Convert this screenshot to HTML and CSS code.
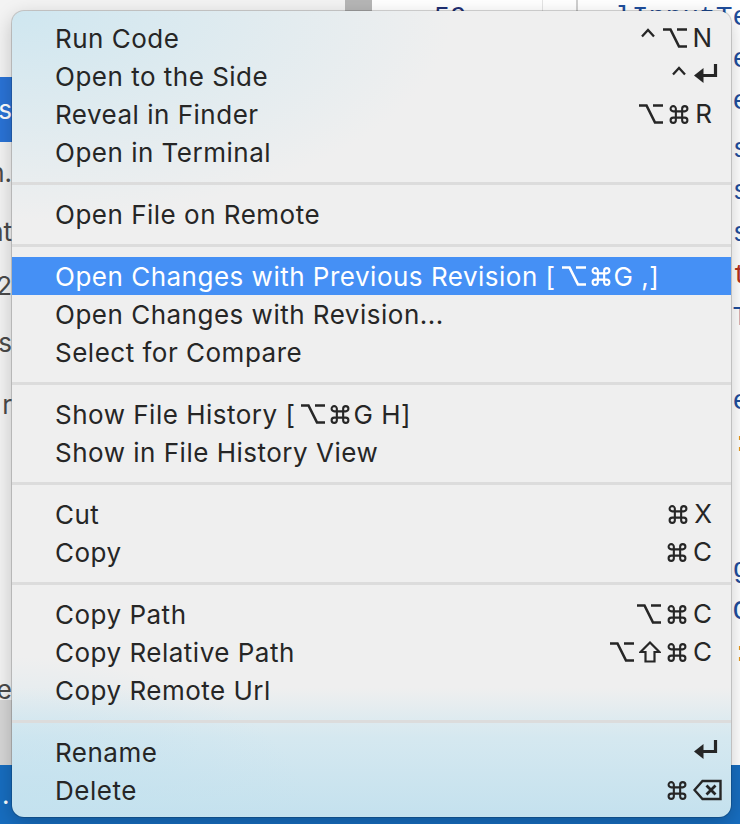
FILE: index.html
```html
<!DOCTYPE html>
<html lang="en">
<head>
<meta charset="utf-8">
<title>Context menu</title>
<link rel="stylesheet" href="styles.css">
</head>
<body>
<div class="desk">
  <aside class="sidebar">
    <div class="srow r1"></div>
    <div class="srow r2 sel"><span>Files</span></div>
    <div class="srow r3"><span>json.</span></div>
    <div class="srow r4"><span>print</span></div>
    <div class="srow r5"><span>v2</span></div>
    <div class="srow r6"><span>tests</span></div>
    <div class="srow r7"><span>r</span></div>
    <div class="srow r8"></div>
    <div class="srow r9"><span>package</span></div>
    <div class="srow r10"></div>
  </aside>
  <div class="scrollcol"><div class="thumb"></div></div>
  <main class="editor">
    <div class="gutter"><div class="ln">59</div></div>
    <div class="fold"></div>
    <div class="code">
      <div class="cl kw">lInputTe</div>
      <div class="cl kw">       e</div>
      <div class="cl kw">       e</div>
      <div class="cl kw s1">       s</div>
      <div class="cl kw">       s</div>
      <div class="cl kw">       s</div>
      <div class="cl red">       t</div>
      <div class="cl kw">       T</div>
      <div class="cl kw">        </div>
      <div class="cl kw">       e</div>
      <div class="cl or">       :</div>
      <div class="cl kw">        </div>
      <div class="cl kw">        </div>
      <div class="cl kw">       g</div>
      <div class="cl kw">       C</div>
      <div class="cl or">       :</div>
    </div>
  </main>
</div>
<footer class="status"><span class="dot">.</span></footer>

<div class="menu">
  <div class="item"><span class="label">Run Code</span>
    <span class="keys"><svg class="ctrl" width="16" height="20" viewBox="0 0 16 20"><path d="M2 8.5 L8 2 L14 8.5" fill="none" stroke="currentColor" stroke-width="2.3"/></svg><svg class="opt" width="24" height="20" viewBox="0 0 24 20"><path d="M0 1.5 H7.5 L16 18.5 H24 M14 1.5 H24" fill="none" stroke="currentColor" stroke-width="2.6"/></svg><span class="k">N</span></span></div>
  <div class="item"><span class="label">Open to the Side</span>
    <span class="keys"><svg class="ctrl" width="16" height="20" viewBox="0 0 16 20"><path d="M2 8.5 L8 2 L14 8.5" fill="none" stroke="currentColor" stroke-width="2.3"/></svg><svg class="ret" width="24" height="24" viewBox="0 0 24 24"><path d="M21.5 0 V11.5 H8" fill="none" stroke="currentColor" stroke-width="3.2"/><path d="M0 11.5 L9.5 4 V19 Z" fill="currentColor"/></svg></span></div>
  <div class="item"><span class="label">Reveal in Finder</span>
    <span class="keys"><svg class="opt" width="24" height="20" viewBox="0 0 24 20"><path d="M0 1.5 H7.5 L16 18.5 H24 M14 1.5 H24" fill="none" stroke="currentColor" stroke-width="2.6"/></svg><svg class="cmd" width="22" height="21" viewBox="0 0 20 20"><path d="M7 7V4.5a2.5 2.5 0 1 0-2.5 2.5H15.5a2.5 2.5 0 1 0-2.5-2.5V15.5a2.5 2.5 0 1 0 2.5-2.5H4.5a2.5 2.5 0 1 0 2.5 2.5Z" fill="none" stroke="currentColor" stroke-width="2"/></svg><span class="k">R</span></span></div>
  <div class="item"><span class="label">Open in Terminal</span></div>
  <div class="sep"></div>
  <div class="item"><span class="label">Open File on Remote</span></div>
  <div class="sep"></div>
  <div class="item active"><span class="label">Open Changes with Previous Revision [<svg class="opt in" width="24" height="20" viewBox="0 0 24 20"><path d="M0 1.5 H7.5 L16 18.5 H24 M14 1.5 H24" fill="none" stroke="currentColor" stroke-width="2.6"/></svg><svg class="cmd in" width="22" height="21" viewBox="0 0 20 20"><path d="M7 7V4.5a2.5 2.5 0 1 0-2.5 2.5H15.5a2.5 2.5 0 1 0-2.5-2.5V15.5a2.5 2.5 0 1 0 2.5-2.5H4.5a2.5 2.5 0 1 0 2.5 2.5Z" fill="none" stroke="currentColor" stroke-width="2"/></svg>G ,]</span></div>
  <div class="item"><span class="label">Open Changes with Revision...</span></div>
  <div class="item"><span class="label">Select for Compare</span></div>
  <div class="sep"></div>
  <div class="item"><span class="label">Show File History [<svg class="opt in" width="24" height="20" viewBox="0 0 24 20"><path d="M0 1.5 H7.5 L16 18.5 H24 M14 1.5 H24" fill="none" stroke="currentColor" stroke-width="2.6"/></svg><svg class="cmd in" width="22" height="21" viewBox="0 0 20 20"><path d="M7 7V4.5a2.5 2.5 0 1 0-2.5 2.5H15.5a2.5 2.5 0 1 0-2.5-2.5V15.5a2.5 2.5 0 1 0 2.5-2.5H4.5a2.5 2.5 0 1 0 2.5 2.5Z" fill="none" stroke="currentColor" stroke-width="2"/></svg>G H]</span></div>
  <div class="item"><span class="label">Show in File History View</span></div>
  <div class="sep"></div>
  <div class="item"><span class="label">Cut</span>
    <span class="keys"><svg class="cmd" width="22" height="21" viewBox="0 0 20 20"><path d="M7 7V4.5a2.5 2.5 0 1 0-2.5 2.5H15.5a2.5 2.5 0 1 0-2.5-2.5V15.5a2.5 2.5 0 1 0 2.5-2.5H4.5a2.5 2.5 0 1 0 2.5 2.5Z" fill="none" stroke="currentColor" stroke-width="2"/></svg><span class="k">X</span></span></div>
  <div class="item"><span class="label">Copy</span>
    <span class="keys"><svg class="cmd" width="22" height="21" viewBox="0 0 20 20"><path d="M7 7V4.5a2.5 2.5 0 1 0-2.5 2.5H15.5a2.5 2.5 0 1 0-2.5-2.5V15.5a2.5 2.5 0 1 0 2.5-2.5H4.5a2.5 2.5 0 1 0 2.5 2.5Z" fill="none" stroke="currentColor" stroke-width="2"/></svg><span class="k">C</span></span></div>
  <div class="sep"></div>
  <div class="item"><span class="label">Copy Path</span>
    <span class="keys"><svg class="opt" width="24" height="20" viewBox="0 0 24 20"><path d="M0 1.5 H7.5 L16 18.5 H24 M14 1.5 H24" fill="none" stroke="currentColor" stroke-width="2.6"/></svg><svg class="cmd" width="22" height="21" viewBox="0 0 20 20"><path d="M7 7V4.5a2.5 2.5 0 1 0-2.5 2.5H15.5a2.5 2.5 0 1 0-2.5-2.5V15.5a2.5 2.5 0 1 0 2.5-2.5H4.5a2.5 2.5 0 1 0 2.5 2.5Z" fill="none" stroke="currentColor" stroke-width="2"/></svg><span class="k">C</span></span></div>
  <div class="item"><span class="label">Copy Relative Path</span>
    <span class="keys"><svg class="opt" width="24" height="20" viewBox="0 0 24 20"><path d="M0 1.5 H7.5 L16 18.5 H24 M14 1.5 H24" fill="none" stroke="currentColor" stroke-width="2.6"/></svg><svg class="shift" width="22" height="22" viewBox="0 0 22 22"><path d="M11 1.5 L20.5 11 H15.5 V20.5 H6.5 V11 H1.5 Z" fill="none" stroke="currentColor" stroke-width="2.2" stroke-linejoin="miter"/></svg><svg class="cmd" width="22" height="21" viewBox="0 0 20 20"><path d="M7 7V4.5a2.5 2.5 0 1 0-2.5 2.5H15.5a2.5 2.5 0 1 0-2.5-2.5V15.5a2.5 2.5 0 1 0 2.5-2.5H4.5a2.5 2.5 0 1 0 2.5 2.5Z" fill="none" stroke="currentColor" stroke-width="2"/></svg><span class="k">C</span></span></div>
  <div class="item"><span class="label">Copy Remote Url</span></div>
  <div class="sep"></div>
  <div class="item"><span class="label">Rename</span>
    <span class="keys"><svg class="ret" width="24" height="24" viewBox="0 0 24 24"><path d="M21.5 0 V11.5 H8" fill="none" stroke="currentColor" stroke-width="3.2"/><path d="M0 11.5 L9.5 4 V19 Z" fill="currentColor"/></svg></span></div>
  <div class="item"><span class="label">Delete</span>
    <span class="keys"><svg class="cmd" width="22" height="21" viewBox="0 0 20 20"><path d="M7 7V4.5a2.5 2.5 0 1 0-2.5 2.5H15.5a2.5 2.5 0 1 0-2.5-2.5V15.5a2.5 2.5 0 1 0 2.5-2.5H4.5a2.5 2.5 0 1 0 2.5 2.5Z" fill="none" stroke="currentColor" stroke-width="2"/></svg><svg class="del" width="29" height="22" viewBox="0 0 29 22"><path d="M1.5 11 L9.5 2 H27.5 V20 H9.5 Z" fill="none" stroke="currentColor" stroke-width="2.4" stroke-linejoin="miter"/><path d="M13.5 6.5 L22.5 15.5 M22.5 6.5 L13.5 15.5" fill="none" stroke="currentColor" stroke-width="2.8"/></svg></span></div>
</div>
</body>
</html>
```

FILE: styles.css
```css
html, body {
  margin: 0;
  padding: 0;
}
body {
  width: 740px;
  height: 824px;
  overflow: hidden;
  position: relative;
  background: #ffffff;
  font-family: Inter, "Noto Sans", "DejaVu Sans", sans-serif;
}

/* ---------- background editor ---------- */
.desk {
  display: grid;
  grid-template-columns: 345px 27px 1fr;
  grid-template-rows: 765px;
  height: 765px;
  overflow: hidden;
}
.sidebar {
  background: #f3f3f3;
  display: flex;
  flex-direction: column;
  font-size: 26px;
  color: #4a4a4a;
  overflow: hidden;
}
.srow {
  width: 12px;
  display: flex;
  justify-content: flex-end;
  align-items: center;
  overflow: hidden;
  white-space: nowrap;
  flex: none;
}
.srow span { flex: none; }
.r1 { height: 77px; }
.r2 { height: 65px; }
.r3 { height: 60px; }
.r4 { height: 58px; }
.r5 { height: 50px; }
.r6 { height: 64px; }
.r7 { height: 60px; }
.r8 { height: 100px; }
.r9 { height: 166px; align-items: flex-start; }
.r9 span { line-height: 26px; margin-top: 143px; }
.r10 { flex: 1; background: #d6d6d6; }
.sel { background: #2a73d6; color: #ffffff; }

.scrollcol { background: #ececec; }
.thumb { height: 60px; background: #b6b6b6; }

.editor {
  background: #ffffff;
  display: grid;
  grid-template-columns: 171px 35px 1fr;
  overflow: hidden;
}
.gutter {
  border-right: 1px solid #e4e4e4;
}
.ln {
  font-family: "Liberation Mono", monospace;
  font-size: 27px;
  color: #1f2f73;
  padding-left: 62px;
  line-height: 36px;
}
.fold { border-right: 2px solid #cfcfcf; }
.code {
  font-family: "Liberation Mono", monospace;
  font-size: 28px;
  padding-left: 37px;
  overflow: hidden;
}
.cl {
  height: 42px;
  line-height: 36px;
  white-space: pre;
}
.s1 { margin-top: 6px; }
.kw { color: #1f4e9c; }
.red { color: #b5311f; }
.or { color: #c9781b; }

.status {
  height: 59px;
  background: #176dbf;
  color: #ffffff;
  font-size: 26px;
  padding-left: 2px;
  overflow: hidden;
}
.dot { display: block; line-height: 40px; padding-top: 10px; }

/* ---------- context menu (overlay) ---------- */
.menu {
  position: absolute;
  left: 12px;
  top: 11px;
  width: 719px;
  box-sizing: border-box;
  padding: 8px 0;
  border-radius: 12px;
  background:
    radial-gradient(ellipse 440px 210px at 0 0, rgba(205, 230, 240, 0.95), rgba(205, 230, 240, 0) 100%),
    radial-gradient(ellipse 300px 160px at 0 100%, rgba(196, 226, 239, 0.9), rgba(196, 226, 239, 0) 100%),
    linear-gradient(to bottom, rgba(200, 228, 239, 0) 84%, rgba(212, 232, 240, 0.95) 90%, #c4e1ee 100%),
    #efefef;
  box-shadow: 0 0 0 1px rgba(0, 0, 0, 0.16), 0 6px 20px rgba(0, 0, 0, 0.22);
  color: #262626;
  font-size: 26px;
}
.item {
  height: 38px;
  display: flex;
  align-items: center;
  justify-content: space-between;
  padding: 0 19px 0 43px;
  white-space: nowrap;
}
.label {
  display: inline-flex;
  align-items: center;
  letter-spacing: 0.5px;
}
.item.active {
  background: #4590f5;
  color: #ffffff;
}
.sep {
  height: 3px;
  margin: 11px 0 10px;
  background: #dcdcdc;
}
.keys {
  display: inline-flex;
  align-items: center;
  gap: 5px;
}
.k { line-height: 38px; }
.ctrl { margin-right: 2px; }
.ret { margin-right: -6px; }
.del { margin-right: -10px; }
.in { margin: 0 2px; }
.in.opt { margin-left: 6px; }
```
